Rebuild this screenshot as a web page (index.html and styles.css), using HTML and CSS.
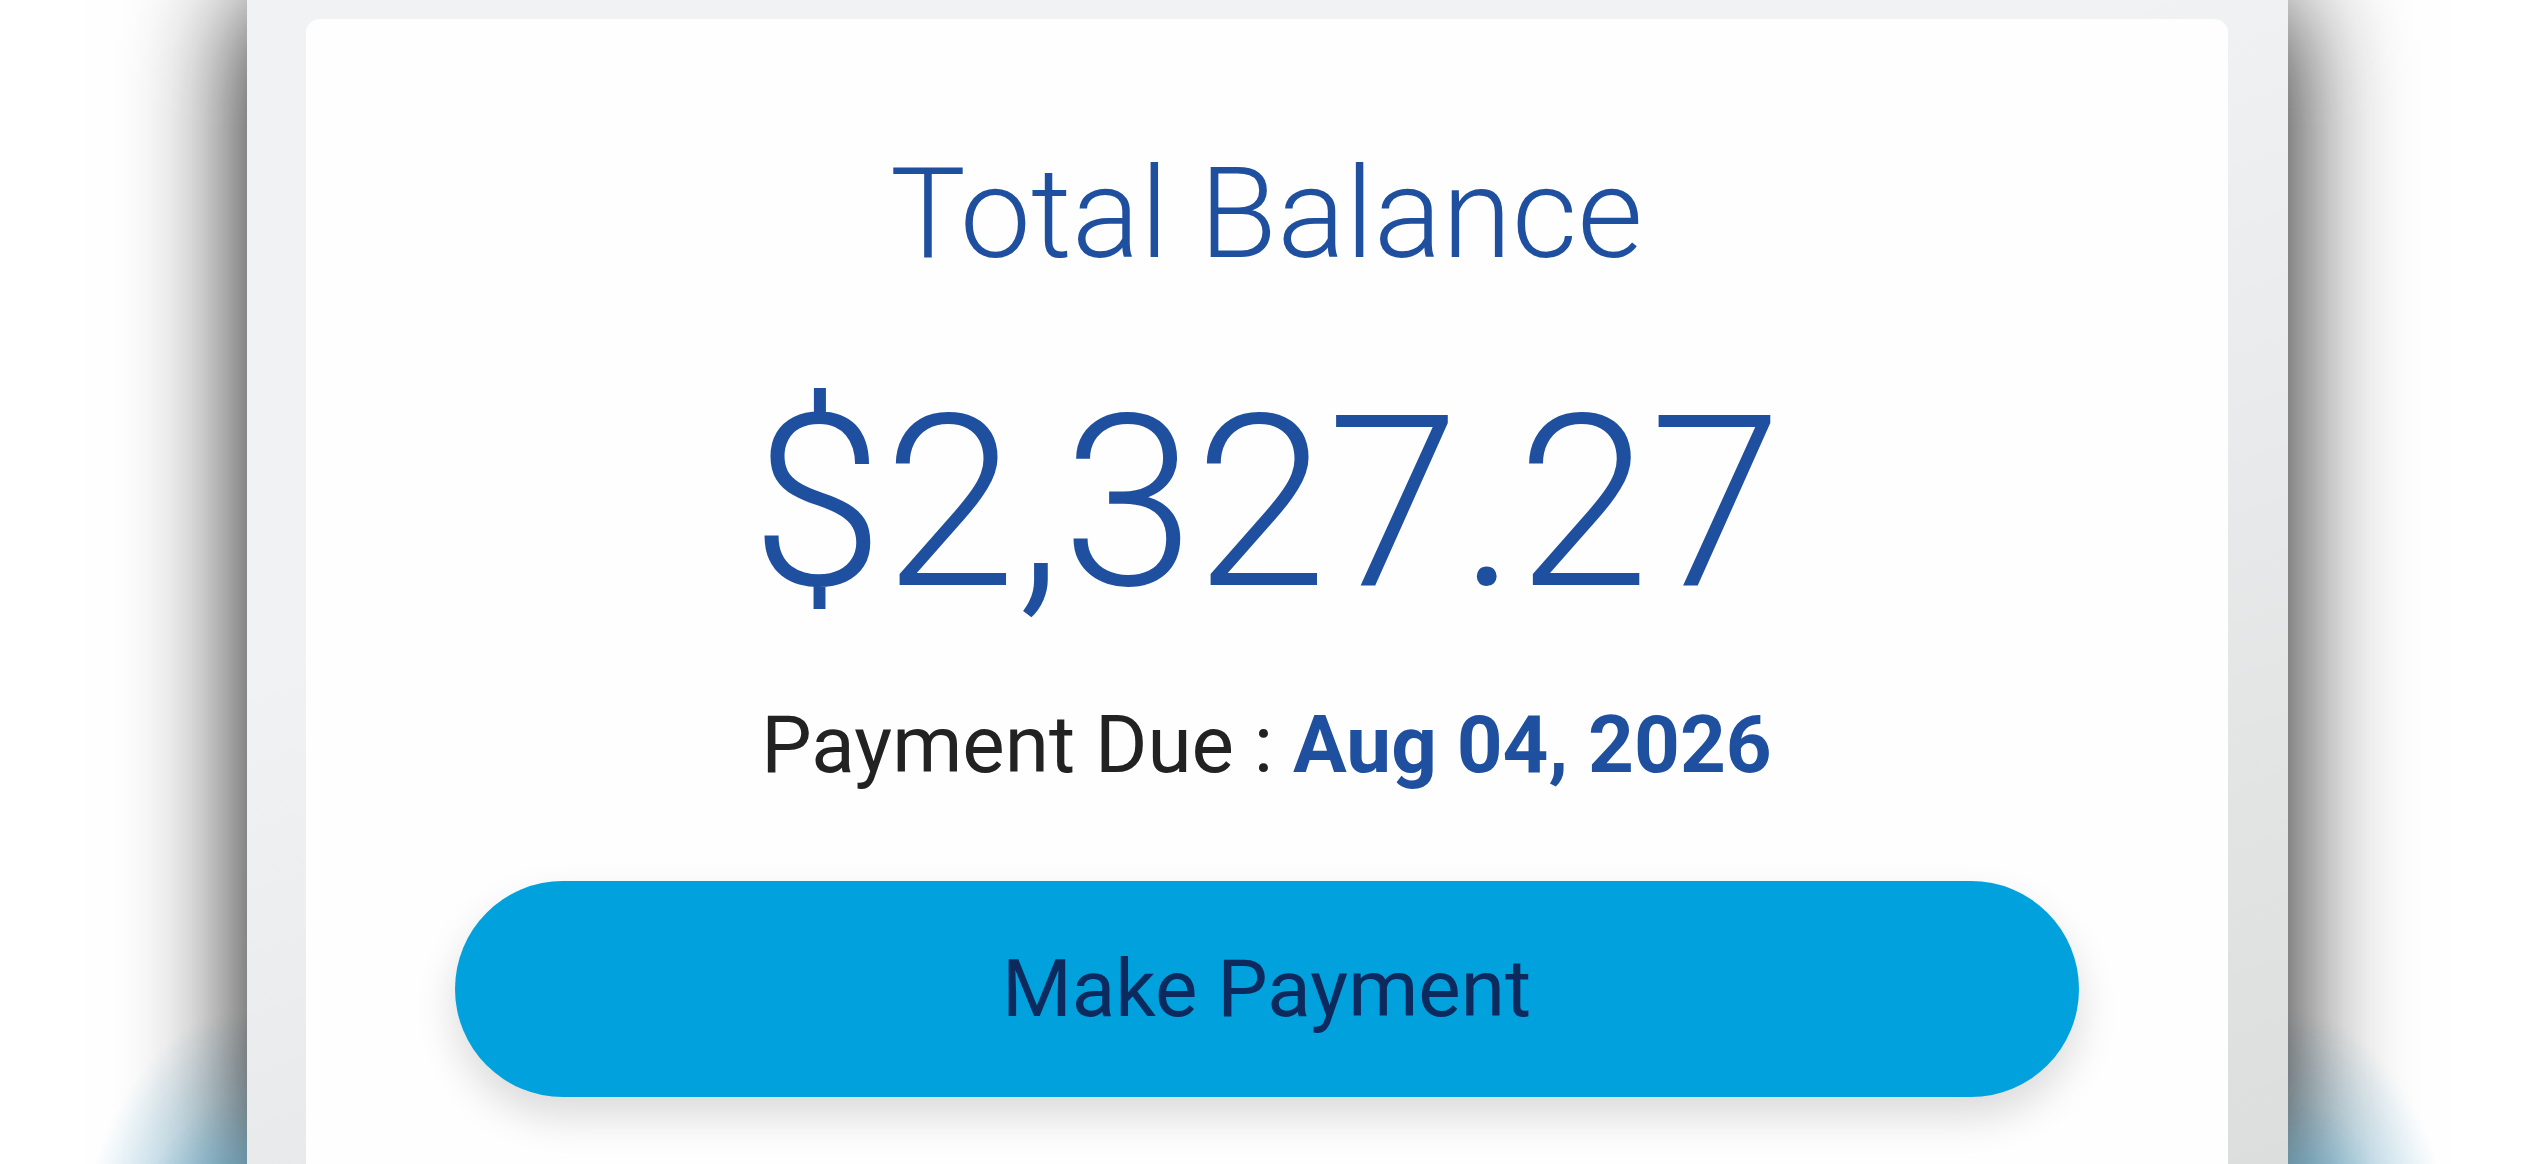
FILE: index.html
```html
<html>
  <head>
    <meta charset="UTF-8" />
    <meta name="viewport" content="width=device-width, initial-scale=1.0" />
    <link rel="stylesheet" href="styles.css">
  </head>
  <body>
    <div class="phone">
      <div class="balanceCard">
        <h1 class="balanceTitle">Total Balance</h1>
        <div class="balanceAmount">$2,327.27</div>
        <p class="dueLine">Payment Due : <b>Aug 04, 2026</b></p>
        <button class="payButton" type="button">Make Payment</button>
      </div>
    </div>
  </body>
</html>
```

FILE: styles.css
```css
html,
body {
  height: 100%;
}

body {
  margin: 0;
  overflow: hidden;
  font-family: Roboto, "Liberation Sans", sans-serif;
  background-color: #ffffff;
  /* blue glow peeking out at the bottom corners */
  background-image: radial-gradient(
      170px 280px at 246px 1290px,
      rgba(20, 130, 180, 1) 0%,
      rgba(20, 130, 180, 0.6) 35%,
      rgba(20, 130, 180, 0.2) 70%,
      rgba(20, 130, 180, 0) 100%
    ),
    radial-gradient(
      170px 280px at 2287px 1290px,
      rgba(20, 130, 180, 1) 0%,
      rgba(20, 130, 180, 0.6) 35%,
      rgba(20, 130, 180, 0.2) 70%,
      rgba(20, 130, 180, 0) 100%
    );
  background-repeat: no-repeat;
}

.phone {
  width: 2041px;
  height: 100%;
  margin: 0 auto;
  padding: 19px 60px 0 59px;
  box-sizing: border-box;
  background: linear-gradient(160deg, #f0f2f4 35%, #dcdedd);
  box-shadow: 0 0 110px rgba(0, 0, 0, 0.95);
}

.balanceCard {
  height: 100%;
  background-color: #fefefe;
  border-radius: 14px 14px 0 0;
  padding-top: 131px;
  box-sizing: border-box;
  display: flex;
  flex-direction: column;
  align-items: center;
  text-align: center;
}

.balanceTitle {
  margin: 0;
  font-size: 127px;
  line-height: 1;
  font-weight: 300;
  color: #1f4f9f;
}

.balanceAmount {
  margin-top: 107px;
  font-size: 239px;
  line-height: 1;
  font-weight: 300;
  color: #1f4f9f;
}

.dueLine {
  margin: 82px 0 0;
  font-size: 80px;
  line-height: 1;
  color: #222222;
}

.dueLine b {
  color: #1f4f9f;
  font-weight: 700;
}

.payButton {
  margin-top: 96px;
  width: 1624px;
  height: 216px;
  border: none;
  border-radius: 108px;
  background-color: #00a1dc;
  color: #0c2a5e;
  font-family: Roboto, "Liberation Sans", sans-serif;
  font-size: 80px;
  line-height: 1;
  box-shadow: 0 20px 40px rgba(0, 0, 0, 0.14);
}
```
